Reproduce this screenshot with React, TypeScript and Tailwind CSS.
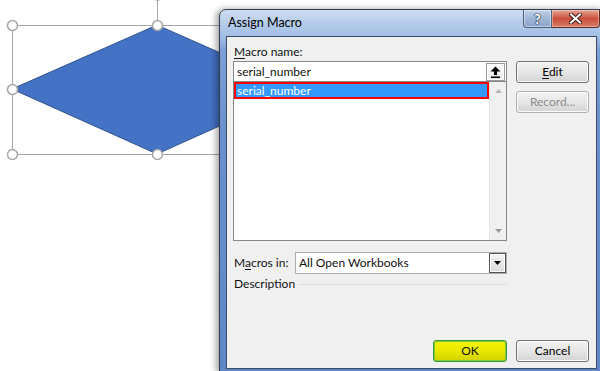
import React from 'react';

const font = { fontFamily: 'Lato, "Liberation Sans", sans-serif' };

function Shape() {
    // selected diamond on the worksheet, partly hidden by the dialog
    const handles: [number, number][] = [
        [12, 25], [157, 25], [302, 25],
        [12, 89], [302, 89],
        [12, 154], [157, 154], [302, 154],
    ];
    return (
        <svg className="absolute left-0 top-0" width="600" height="371">
            <line x1="157.5" y1="0" x2="157.5" y2="25" stroke="#a6a6a6" strokeWidth="1" />
            <circle cx="157.5" cy="-5" r="5" fill="#fff" stroke="#a6a6a6" strokeWidth="1.5" />
            <rect x="12.5" y="25.5" width="290" height="129" fill="none" stroke="#a6a6a6" strokeWidth="1" />
            <polygon points="12,89 157,25 302,89 157,154" fill="#4472c4" stroke="#2f528f" strokeWidth="1" />
            {handles.map(([x, y]) => (
                <circle key={`${x}-${y}`} cx={x + 0.5} cy={y + 0.5} r="5" fill="#fff" stroke="#a6a6a6" strokeWidth="1.5" />
            ))}
        </svg>
    );
}

function Btn({ children, disabled }: { children: React.ReactNode; disabled?: boolean }) {
    return (
        <div
            className={`w-[73px] h-[22px] rounded-[3px] border bg-gradient-to-b from-[#f2f2f2] via-[#e6e6e6] to-[#d4d4d4] shadow-[inset_0_0_0_1px_#fcfcfc] flex items-center justify-center ${
                disabled ? 'text-[#8b8b8b] border-[#adb2b5]' : 'text-black border-[#707070]'
            }`}
        >
            {children}
        </div>
    );
}

function CaptionButtons() {
    return (
        <div className="flex self-start mr-[3px]">
            <div className="w-[29px] h-[18px] rounded-bl-[4px] border border-t-0 border-[#4e5f78] bg-gradient-to-b from-[#c4d4e9] via-[#9fb6d6] to-[#8aa5cc] flex items-center justify-center shadow-[inset_0_0_0_1px_rgba(255,255,255,0.45)]">
                <span className="text-white font-black text-[14px] leading-none [text-shadow:0_0_1px_#1f2c44,0_0_1px_#1f2c44,0_0_1px_#1f2c44,0_0_1px_#1f2c44]">?</span>
            </div>
            <div className="w-[48px] h-[18px] rounded-br-[4px] border border-l-0 border-t-0 border-[#5e2a22] bg-gradient-to-b from-[#e7a495] via-[#c9503d] to-[#d57a66] flex items-center justify-center shadow-[inset_0_0_0_1px_rgba(255,255,255,0.35)]">
                <svg width="13" height="11" viewBox="0 0 13 11">
                    <path d="M2 1.5 L11 9.5 M11 1.5 L2 9.5" stroke="#3b1a14" strokeWidth="4" strokeLinecap="square" />
                    <path d="M2 1.5 L11 9.5 M11 1.5 L2 9.5" stroke="#fff" strokeWidth="2" strokeLinecap="square" />
                </svg>
            </div>
        </div>
    );
}

export default function App() {
    return (
        <div className="relative w-[600px] h-[371px] overflow-hidden bg-white" style={font}>
            <Shape />

            {/* Assign Macro dialog */}
            <div className="absolute left-[219px] top-[9px] w-[385px] h-[364px] flex flex-col rounded-tl-[7px] border border-[#2f3b4c] bg-[linear-gradient(180deg,#cfdef1_0px,#b3cbe9_14px,#a2bfe6_26px,#7c9fd7_40px,#6a90cd_120px,#5f87c8_100%)] shadow-[-3px_0_6px_rgba(0,0,0,0.35)]">
                <div className="h-[26px] flex items-start justify-between">
                    <span className="pl-[8px] pt-[5px] text-[12.5px] leading-[16px] text-black">Assign Macro</span>
                    <CaptionButtons />
                </div>

                <div className="mx-[6px] flex-1 mb-[3px] border border-[#3d4c63] bg-[#f0f0f0] flex flex-col pl-[6px] pr-[5px] pt-[7px] pb-[6px] text-[12px] text-[#111]">
                    <div className="h-[16px] leading-[16px] pl-[1px]">
                        <span className="underline underline-offset-2">M</span>acro name:
                    </div>

                    <div className="flex flex-1 mt-[1px]">
                        {/* left column */}
                        <div className="w-[274px] flex flex-col">
                            <div className="h-[180px] border border-[#828790] bg-white flex flex-col">
                                <div className="h-[19px] flex items-center justify-between pl-[3px] pr-[1px]">
                                    <span>serial_number</span>
                                    <div className="w-[19px] h-[18px] border border-[#9a9a9a] bg-gradient-to-b from-[#ffffff] to-[#e8e8e8] flex items-center justify-center shadow-[inset_0_0_0_1px_#fff]">
                                        <svg width="11" height="12" viewBox="0 0 11 12">
                                            <path d="M5.5 0.5 L10.5 5.5 L7 5.5 L7 9 L4 9 L4 5.5 L0.5 5.5 Z" fill="#000" />
                                            <rect x="1" y="10.5" width="9" height="1.5" fill="#000" />
                                        </svg>
                                    </div>
                                </div>
                                <div className="flex flex-1 border-t border-[#828790]">
                                    <div className="flex-1">
                                        <div className="h-[17px] border-2 border-[#ff0000] bg-[#3399ff] text-white pl-[1px] leading-[13px]">
                                            serial_number
                                        </div>
                                    </div>
                                    <div className="w-[17px] bg-[#f0f0f0] border-l border-[#e4e4e4] flex flex-col items-center justify-between py-[7px]">
                                        <svg width="7" height="4" viewBox="0 0 7 4"><path d="M3.5 0 L7 4 L0 4 Z" fill="#b5b5b5" /></svg>
                                        <svg width="7" height="4" viewBox="0 0 7 4"><path d="M0 0 L7 0 L3.5 4 Z" fill="#9a9a9a" /></svg>
                                    </div>
                                </div>
                            </div>

                            <div className="mt-[11px] h-[22px] flex items-center">
                                <span className="w-[62px] shrink-0 pl-[1px]">
                                    M<span className="underline underline-offset-2">a</span>cros in:
                                </span>
                                <div className="w-[212px] h-[22px] border border-[#abadb3] bg-white flex items-center justify-between pl-[3px]">
                                    <span>All Open Workbooks</span>
                                    <div className="w-[17px] h-[20px] border border-[#555] bg-gradient-to-b from-[#f4f4f4] to-[#d9d9d9] flex items-center justify-center shadow-[inset_0_0_0_1px_#fff]">
                                        <svg width="7" height="4" viewBox="0 0 7 4"><path d="M0 0 L7 0 L3.5 4 Z" fill="#000" /></svg>
                                    </div>
                                </div>
                            </div>

                            <div className="mt-[2px] h-[16px] flex items-center pl-[1px]">
                                <span>Description</span>
                                <div className="flex-1 ml-[5px] h-px bg-[#d5dfe5]" />
                            </div>

                            <div className="flex-1" />
                            <div className="self-end w-[74px] h-[22px] rounded-[3px] border border-[#3c9a3c] bg-gradient-to-b from-[#f4f400] via-[#e8e800] to-[#d2d200] shadow-[inset_0_0_0_1px_#7bc83a] flex items-center justify-center">
                                OK
                            </div>
                        </div>

                        {/* right column */}
                        <div className="w-[73px] ml-[9px] flex flex-col">
                            <Btn>
                                <span><span className="underline underline-offset-2">E</span>dit</span>
                            </Btn>
                            <div className="mt-[8px]">
                                <Btn disabled>Record...</Btn>
                            </div>
                            <div className="flex-1" />
                            <Btn>Cancel</Btn>
                        </div>
                    </div>
                </div>
            </div>
        </div>
    );
}
